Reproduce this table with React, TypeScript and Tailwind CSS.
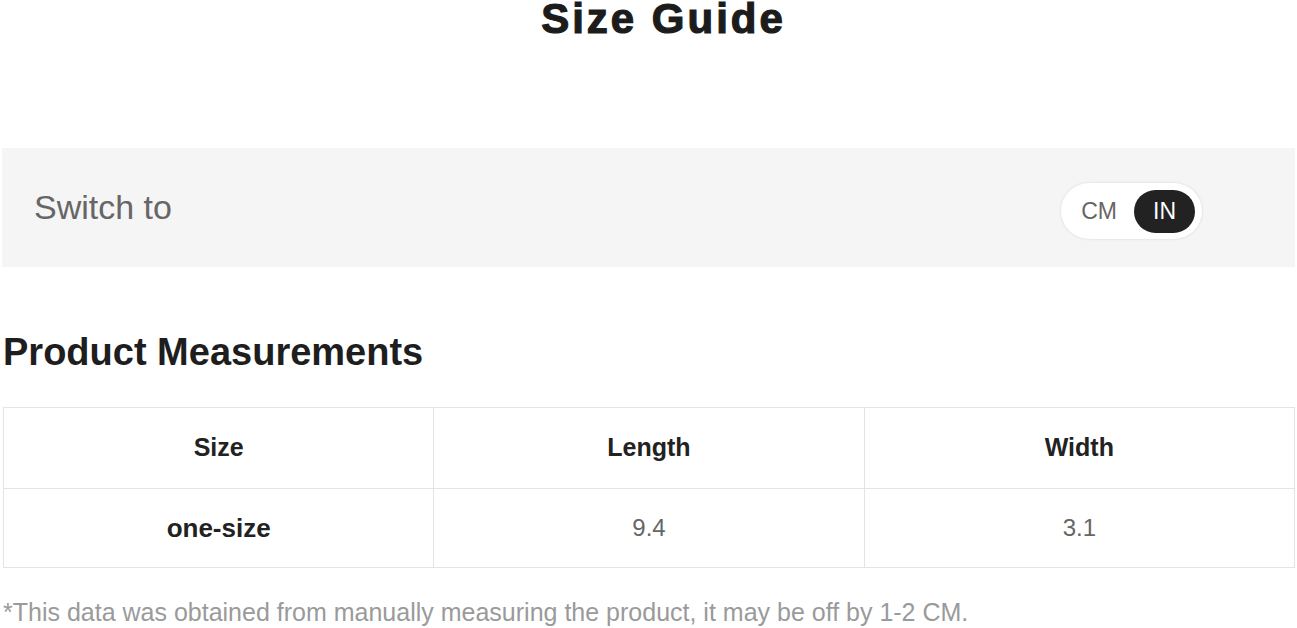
const headers = ["Size", "Length", "Width"];
const rows = [["one-size", "9.4", "3.1"]];

export default function App() {
  return (
    <div className="w-[1297px] h-[628px] overflow-hidden bg-white px-[2px] font-['Liberation_Sans',Arial,sans-serif] text-[#222]">
      {/* title */}
      <div className="h-[148px] flex justify-center pl-[30px]">
        <h1 className="text-[42px] leading-[38px] font-bold tracking-[3px] text-[#1c1c1c] [-webkit-text-stroke:1.2px_#1c1c1c]">
          Size Guide
        </h1>
      </div>

      {/* unit switch */}
      <div className="h-[119px] bg-[#f5f5f5] flex items-center justify-between pl-[32px] pr-[93px]">
        <span className="text-[34px] text-[#666]">Switch to</span>
        <div className="mt-[7px] h-[56px] flex items-center rounded-full bg-white pl-[20px] pr-[7px] shadow-[0_0_3px_rgba(0,0,0,0.12)]">
          <span className="mr-[17px] text-[23px] text-[#666]">CM</span>
          <span className="w-[61px] h-[43px] rounded-full bg-[#222] text-white text-[23px] flex items-center justify-center">
            IN
          </span>
        </div>
      </div>

      <h2 className="mt-[66px] ml-[1px] text-[38px] leading-[38px] font-bold text-[#1e1e1e]">
        Product Measurements
      </h2>

      {/* measurements table */}
      <div className="mt-[36px] ml-[1px] grid grid-cols-3 border-t border-l border-[#e4e4e4]">
        {headers.map((h) => (
          <div
            key={h}
            className="h-[81px] flex items-center justify-center border-r border-b border-[#e4e4e4] text-[25px] font-bold text-[#222]"
          >
            {h}
          </div>
        ))}
        {rows.map((r) =>
          r.map((c, i) => (
            <div
              key={r[0] + i}
              className={
                i === 0
                  ? "h-[79px] flex items-center justify-center border-r border-b border-[#e4e4e4] text-[26px] font-bold text-[#222]"
                  : "h-[79px] flex items-center justify-center border-r border-b border-[#e4e4e4] text-[24px] text-[#666]"
              }
            >
              {c}
            </div>
          ))
        )}
      </div>

      <p className="mt-[32px] ml-[1px] text-[25px] leading-[25px] text-[#9a9a9a] whitespace-nowrap">
        *This data was obtained from manually measuring the product, it may be off by 1-2 CM.
      </p>
    </div>
  );
}
